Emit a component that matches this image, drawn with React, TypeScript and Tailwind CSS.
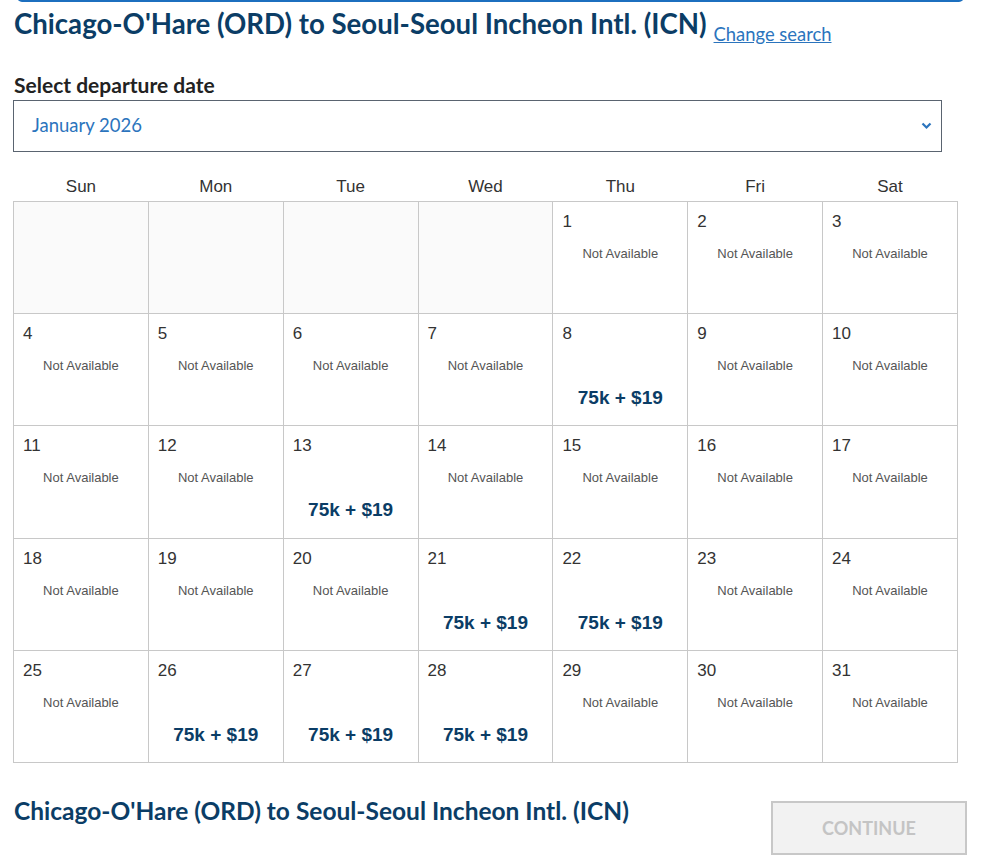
const days = ['Sun', 'Mon', 'Tue', 'Wed', 'Thu', 'Fri', 'Sat'];
const priced = [8, 13, 21, 22, 26, 27, 28];

function Cell({ day }: { day: number | null }) {
  if (day === null) {
    return <td className="border border-[#c8c8c8] bg-[#fafafa] h-[112.4px]" />;
  }
  const hasPrice = priced.includes(day);
  return (
    <td className="border border-[#c8c8c8] h-[112.4px] align-top p-0">
      <div className="flex flex-col h-full">
        <div className="pl-[9px] pt-[8px] text-[17px] leading-[24px] text-[#333]">{day}</div>
        {hasPrice ? (
          <div className="mt-[38px] text-center text-[19px] font-bold text-[#0b3d66]">75k + $19</div>
        ) : (
          <div className="mt-[10px] text-center text-[13px] text-[#555]">Not Available</div>
        )}
      </div>
    </td>
  );
}

export default function App() {
  const cells: (number | null)[] = [null, null, null, null];
  for (let d = 1; d <= 31; d++) cells.push(d);
  const weeks: (number | null)[][] = [];
  for (let i = 0; i < cells.length; i += 7) weeks.push(cells.slice(i, i + 7));

  return (
    <div className="min-h-screen bg-white font-['Lato',sans-serif]">
      <div className="ml-[17px] w-[947px] h-[10px] -mt-[8px] border-2 border-[#1c6fbf] rounded-[10px]" />

      <div className="px-[14px]">
        <div className="flex items-end gap-[7px] mt-[6px]">
          <h1 className="text-[27.6px] leading-[32px] font-bold text-[#0b3d66] whitespace-nowrap">
            Chicago-O'Hare (ORD) to Seoul-Seoul Incheon Intl. (ICN)
          </h1>
          <a href="#" className="text-[18.4px] leading-[20px] text-[#2b74bd] underline mb-[-4px] whitespace-nowrap">Change search</a>
        </div>

        <div className="mt-[33px] text-[21px] font-bold text-[#222] leading-[24px]">Select departure date</div>
        <div className="mt-[3px] w-[929px] -ml-[1px] h-[52px] border border-[#5a6470] flex items-center justify-between pl-[18px] pr-[8px]">
          <span className="text-[18.5px] text-[#2b74bd]">January 2026</span>
          <svg width="11" height="8" viewBox="0 0 11 8" className="mr-[1px]">
            <path d="M1.5 1.5 L5.5 5.5 L9.5 1.5" fill="none" stroke="#2b74bd" strokeWidth="2.2" />
          </svg>
        </div>

        <table className="mt-[22px] -ml-[1px] w-[945px] border-collapse table-fixed font-['Liberation_Sans',sans-serif]">
          <thead>
            <tr>
              {days.map((d) => (
                <th key={d} className="font-normal text-[17px] text-[#333] h-[27px] align-top p-0">{d}</th>
              ))}
            </tr>
          </thead>
          <tbody>
            {weeks.map((w, i) => (
              <tr key={i}>
                {w.map((d, j) => <Cell key={j} day={d} />)}
              </tr>
            ))}
          </tbody>
        </table>

        <div className="mt-[38px] flex items-start justify-between w-[953px]">
          <h2 className="text-[24.5px] leading-[20px] font-bold text-[#0b3d66] whitespace-nowrap">
            Chicago-O'Hare (ORD) to Seoul-Seoul Incheon Intl. (ICN)
          </h2>
          <button className="w-[196px] h-[54px] border-2 border-[#c8c8c8] bg-[#f2f2f2] text-[#c4c4c4] text-[18px] font-bold">
            CONTINUE
          </button>
        </div>
      </div>
    </div>
  );
}
